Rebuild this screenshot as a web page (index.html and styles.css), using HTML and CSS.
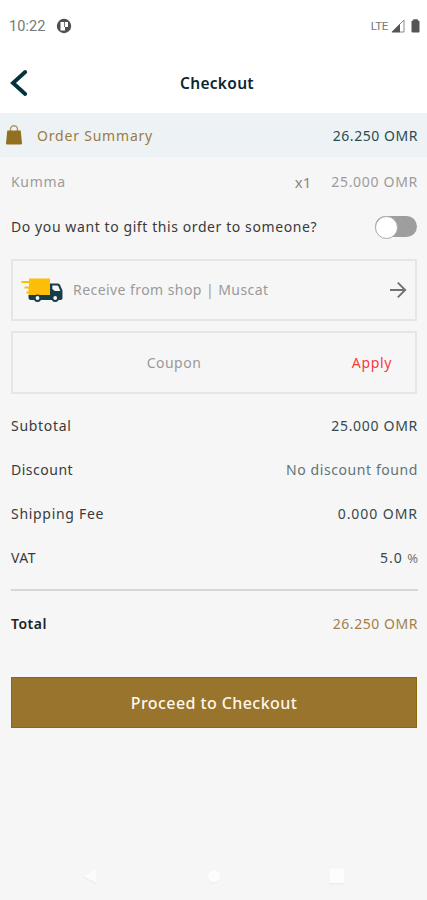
FILE: index.html
```html
<!DOCTYPE html>
<html lang="en">
<head>
<meta charset="utf-8">
<meta name="viewport" content="width=device-width, initial-scale=1">
<title>Checkout</title>
<link rel="stylesheet" href="styles.css">
</head>
<body>
<div class="status">
  <span class="clock">10:22</span>
  <svg class="app" width="16" height="16" viewBox="0 0 16 16"><circle cx="8" cy="8" r="7.2" fill="#4f4f4f"/><path d="M4.500 4h7.500v5H9v3.500H4.500z" fill="#fff"/><path d="M8.500 4v5" stroke="#777" stroke-width="1"/></svg>
  <span class="lte">LTE</span>
  <svg class="signal" width="14" height="14" viewBox="0 0 14 14"><path d="M1 13 13 1v12z" fill="#fff" stroke="#8a8a8a"/><path d="M.5 13.3 9 4.8v8.5z" fill="#555"/></svg>
  <svg width="9" height="14" viewBox="0 0 9 14"><path d="M.5 2.5Q.5 1.500 2 1.500L2.500.3h4L7 1.500Q8.500 1.500 8.500 2.500V12.500q0 1-1 1h-6q-1 0-1-1z" fill="#555"/></svg>
</div>
<header class="header">
  <svg class="back" width="18" height="28" viewBox="0 0 18 28"><path d="M15.200 3 3 14l12.200 11" fill="none" stroke="#03333d" stroke-width="3.900" stroke-linecap="round" stroke-linejoin="miter"/></svg>
  <h1>Checkout</h1>
</header>
<main>
  <section class="summary">
    <svg width="16" height="20" viewBox="0 0 16 20"><path d="M4.500 7V4.300a3.500 3.500 0 0 1 7 0V7" fill="none" stroke="#ad9869" stroke-width="1.400"/><path d="M1.300 5.500h13.400L16 18.200q0 1.300-1.200 1.300H1.200Q0 19.500 0 18.200z" fill="#93701f"/></svg>
    <span class="summary-title">Order Summary</span>
    <span class="amount">26.250 OMR</span>
  </section>
  <div class="item"><span class="name">Kumma</span><span class="qty">x1</span><span class="price">25.000 OMR</span></div>
  <div class="gift"><span class="question">Do you want to gift this order to someone?</span><span class="toggle"></span></div>
  <div class="box delivery">
    <svg class="truck" width="42" height="25" viewBox="0 0 42 25">
      <path d="M8 .5h21v16.500H7.500v-1.500h-2v-2h2V10.500H3.500v-2H8V5H.5V3H8z" fill="#fdbd09"/>
      <path d="M29 5.500h7.500q2.500 0 3.200 3l1.800 4v7.500q0 2-2 2H10q-2.500 0-2.500-2.500V17H29z" fill="#173e48"/>
      <path d="M31.300 7.500h4.700q1 0 1.500 1l1.800 4.500h-5.500l-2.500-2z" fill="#f5f6f6"/>
      <circle cx="16.500" cy="20.300" r="3.700" fill="#173e48"/><circle cx="34.200" cy="20.300" r="3.700" fill="#173e48"/>
      <circle cx="16.500" cy="20" r="1.900" fill="#f6f6f6"/><circle cx="34.200" cy="20" r="1.900" fill="#f6f6f6"/>
    </svg>
    <span class="place">Receive from shop | Muscat</span>
    <svg class="arrow" width="18" height="18" viewBox="0 0 18 18"><path d="M1 9h15M8.800 1.600 16.200 9l-7.400 7.400" fill="none" stroke="#727272" stroke-width="1.900"/></svg>
  </div>
  <div class="box coupon"><span class="code">Coupon</span><span class="apply">Apply</span></div>
  <dl class="costs">
    <div><dt>Subtotal</dt><dd>25.000 OMR</dd></div>
    <div><dt class="tight">Discount</dt><dd class="none">No discount found</dd></div>
    <div><dt>Shipping Fee</dt><dd class="wide">0.000 OMR</dd></div>
    <div><dt class="tight">VAT</dt><dd class="wide">5.0 <span class="percent">%</span></dd></div>
    <div class="total"><dt>Total</dt><dd>26.250 OMR</dd></div>
  </dl>
  <button class="proceed">Proceed to Checkout</button>
</main>
<nav class="nav">
  <svg width="16" height="18" viewBox="0 0 16 18"><path d="m1 10 13 6.500" stroke="#e8e8e8"/><path d="M2 9.500 14 2v13.500z" fill="#fcfcfc"/></svg>
  <svg width="16" height="18" viewBox="0 0 16 18"><circle cx="8" cy="10.500" r="6" fill="#ececec"/><circle cx="8" cy="9.500" r="6" fill="#fdfdfd"/></svg>
  <svg width="16" height="18" viewBox="0 0 16 18"><path d="M0 16h16v1.500H0z" fill="#ececec"/><path d="M1 1.500h14V16H1z" fill="#fdfdfd"/></svg>
</nav>
</body>
</html>
```
FILE: styles.css
```css
* { box-sizing: border-box; }
body {
  margin: 0;
  height: 900px;
  display: flex;
  flex-direction: column;
  background: #f6f6f6;
  color: #3a3a3a;
  font: 14px/20px "Noto Sans", sans-serif;
  letter-spacing: .7px;
  white-space: nowrap;
}
svg { display: block; flex: none; }
.status {
  height: 52px;
  padding: 0 7px 0 9px;
  display: flex;
  align-items: center;
  background: #fff;
  color: #777;
  font-family: Roboto, sans-serif;
}
.clock { padding-top: 2px; font-size: 14.500px; letter-spacing: .1px; }
.app { margin-left: 10px; }
.lte { margin-left: auto; font-size: 11.500px; letter-spacing: -.3px; }
.signal { margin: 0 6px 0 3px; }
.header {
  height: 61px;
  padding: 0 10px;
  display: grid;
  grid-template-columns: 18px 1fr 11px;
  align-items: center;
  background: #fff;
}
h1 {
  margin: 0;
  text-align: center;
  font-size: 15.500px;
  font-weight: 600;
  color: #0b2730;
  letter-spacing: .3px;
}
.summary {
  height: 44px;
  padding: 0 9px 0 6px;
  display: flex;
  align-items: center;
  background: #edf2f5;
}
.summary-title { margin-left: 15px; padding-top: 1px; color: #9b7b3f; letter-spacing: .8px; }
.amount { margin-left: auto; padding-top: 1px; color: #294b51; letter-spacing: .55px; }
.item {
  height: 49px;
  padding: 0 9px 0 11px;
  display: flex;
  align-items: center;
  color: #9c9c9c;
}
.qty { margin-left: auto; font-size: 15px; line-height: 18px; color: #888; letter-spacing: 0; }
.price { margin-left: 20px; }
.gift {
  height: 41px;
  padding: 0 10px 0 11px;
  display: flex;
  align-items: center;
  justify-content: space-between;
}
.question { letter-spacing: .59px; }
.toggle {
  width: 42px;
  height: 21px;
  border-radius: 11px;
  background: #9e9e9e;
}
.toggle::before {
  content: "";
  display: block;
  width: 21px;
  height: 21px;
  border: 1px solid #aaa;
  border-radius: 50%;
  background: #fff;
}
.box {
  margin: 0 10px 0 11px;
  border: 2px solid #e6e6e6;
  display: flex;
  align-items: center;
  color: #9a9a9a;
}
.delivery { height: 62px; margin-top: 12px; padding: 0 8px; }
.place { margin-left: 10px; letter-spacing: .44px; }
.arrow { margin-left: auto; }
.coupon {
  height: 63px;
  margin-top: 10px;
  display: grid;
  grid-template-columns: 322px 74px;
  text-align: center;
}
.code { letter-spacing: .5px; }
.apply { color: #f43b43; }
.costs { margin: 10px 9px 0 11px; }
.costs > div {
  height: 44px;
  display: flex;
  align-items: center;
  justify-content: space-between;
}
.tight { letter-spacing: .5px; }
dd { margin: 0; color: #35494d; }
.none { color: #617478; letter-spacing: .58px; }
.wide { letter-spacing: .95px; }
.percent { font-size: 13px; color: #777; letter-spacing: 0; }
.costs .total {
  height: 68px;
  margin-top: 9px;
  border-top: 2px solid #d6d6d6;
}
.total dt { font-weight: 600; color: #222; letter-spacing: .5px; }
.total dd { color: #a18148; letter-spacing: .55px; }
.proceed {
  display: block;
  width: 406px;
  height: 51px;
  margin: 20px 0 0 11px;
  padding: 0;
  border: 1px solid #8e670e;
  background: #98742c;
  color: #fff8ea;
  font: 500 16px/20px "Noto Sans", sans-serif;
  letter-spacing: .42px;
}
.nav {
  height: 48px;
  margin-top: auto;
  padding: 0 82px;
  display: flex;
  align-items: center;
  justify-content: space-between;
}
```
